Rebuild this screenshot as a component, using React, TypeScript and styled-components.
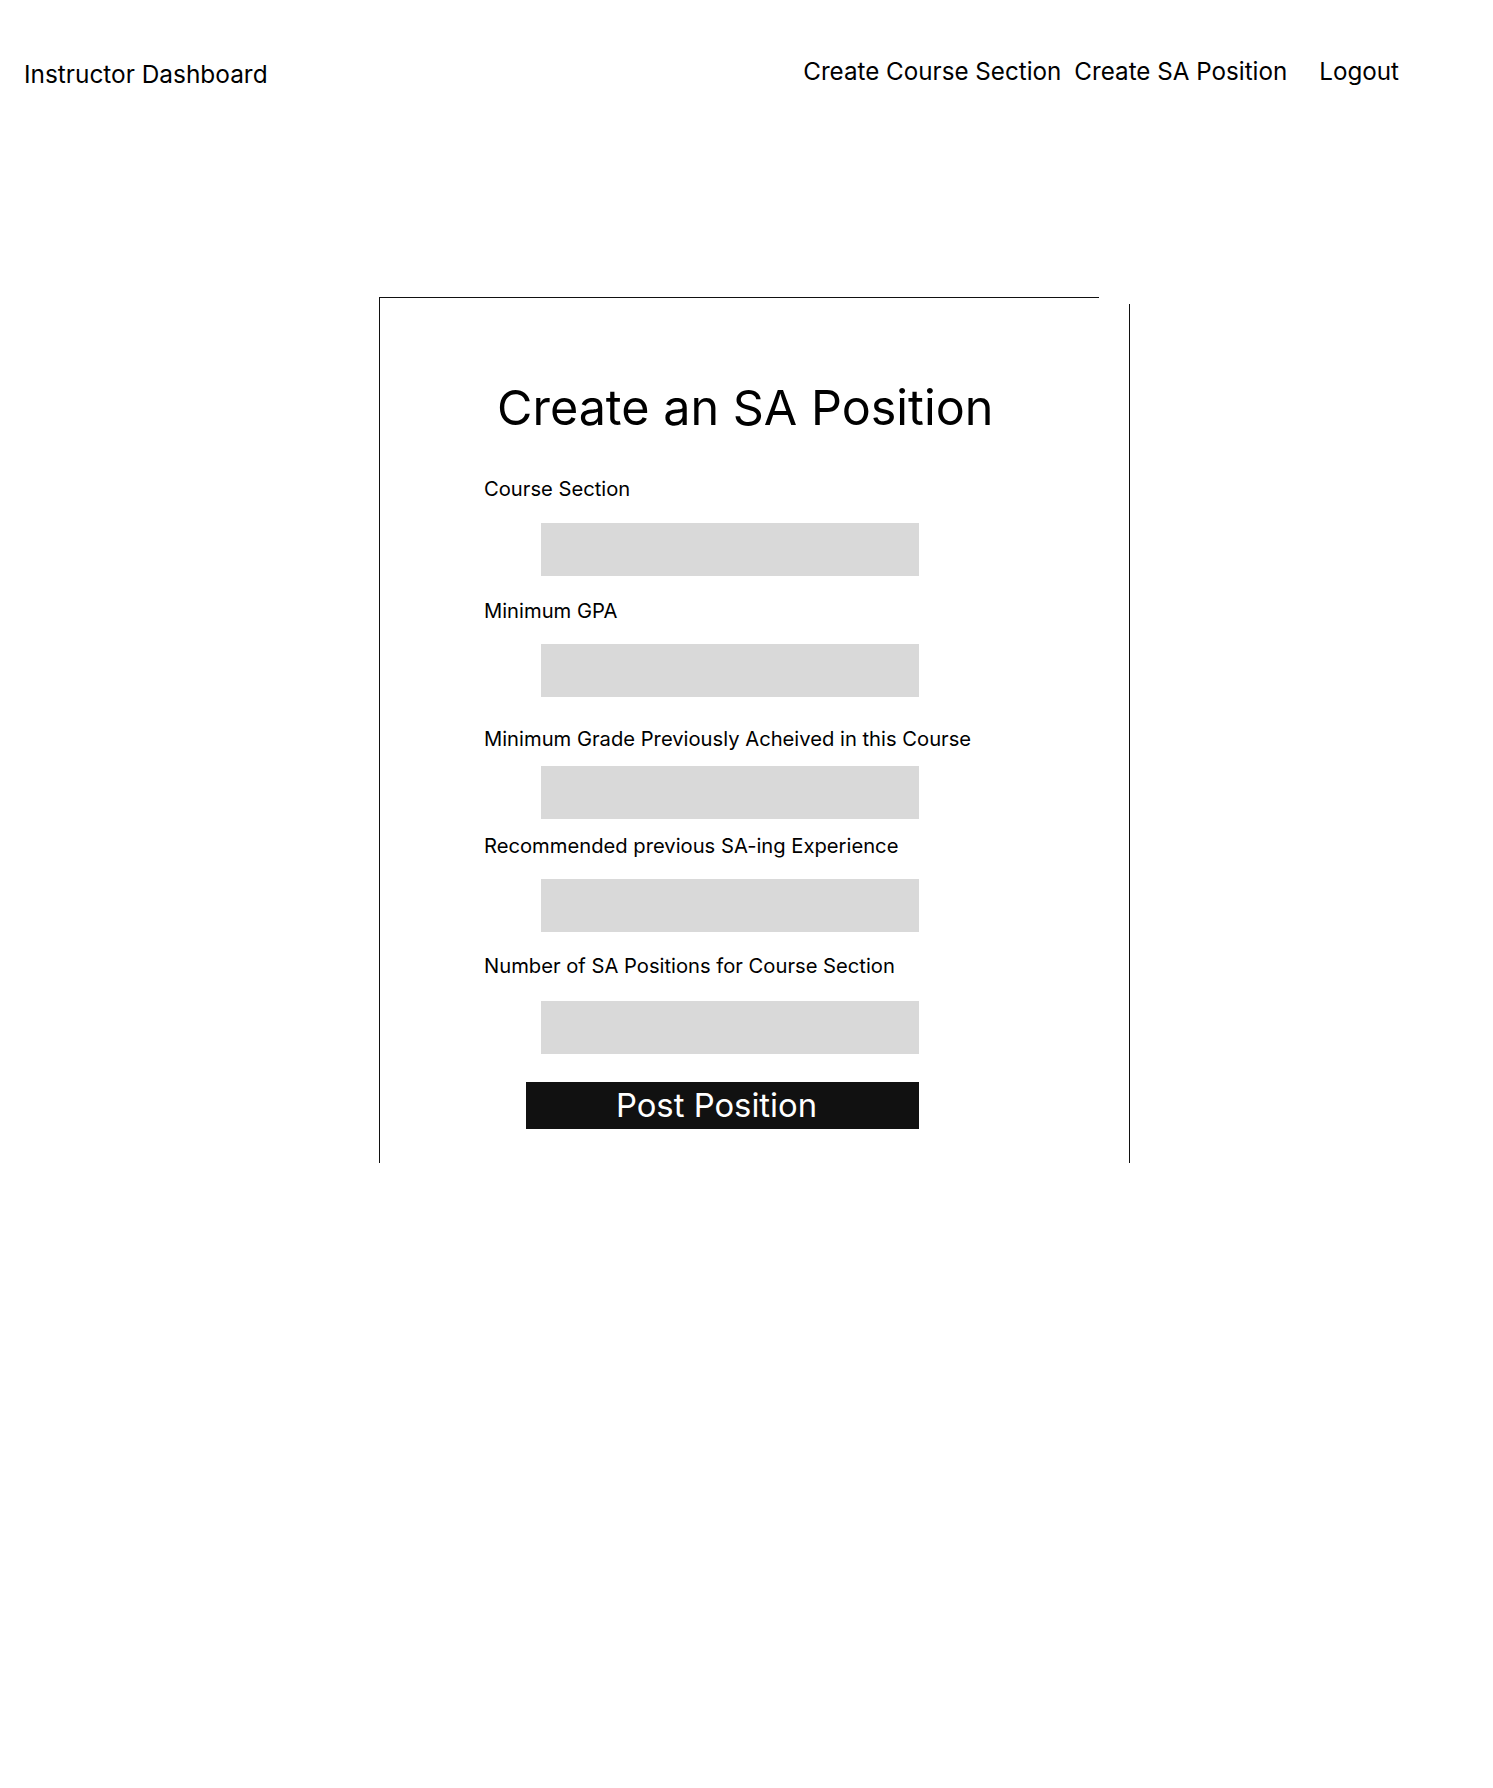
import React from "react";
import styled, { createGlobalStyle } from "styled-components";

const GlobalStyle = createGlobalStyle`
  html, body {
    margin: 0;
    padding: 0;
    background: #ffffff;
    font-family: Inter, "Noto Sans", "Liberation Sans", sans-serif;
    color: #000000;
  }
`;

const Page = styled.div`
  width: 1493px;
  min-height: 1788px;
  background: #ffffff;
  display: flex;
  flex-direction: column;
`;

const TopBar = styled.header`
  display: flex;
  align-items: center;
  height: 146px;
  padding: 0 0 0 24px;
  box-sizing: border-box;
`;

const Brand = styled.div`
  font-size: 24.4px;
  line-height: 30px;
  font-weight: 400;
  margin-top: 2px;
  flex: 1;
`;

const Nav = styled.nav`
  display: flex;
  align-items: center;
  padding-right: 94px;
  margin-top: -2px;
`;

const NavLink = styled.a<{ $gap?: number }>`
  font-size: 24.2px;
  line-height: 30px;
  color: #000000;
  text-decoration: none;
  margin-left: ${(p) => p.$gap ?? 0}px;
  cursor: pointer;
`;

const Main = styled.main`
  display: flex;
  padding: 151px 0 0 379px;
`;

const Card = styled.section`
  position: relative;
  width: 751px;
  height: 866px;
  box-sizing: border-box;
  border-left: 1px solid #111111;
  display: flex;
  flex-direction: column;
  padding: 82px 0 0 0;

  &::before {
    content: "";
    position: absolute;
    left: -1px;
    top: 0;
    width: 720px;
    height: 1px;
    background: #111111;
  }

  &::after {
    content: "";
    position: absolute;
    right: 0;
    top: 7px;
    bottom: 0;
    width: 1px;
    background: #111111;
  }
`;

const Title = styled.h1`
  margin: 0 0 0 117px;
  font-size: 48.5px;
  line-height: 58px;
  font-weight: 400;
`;

const Form = styled.form`
  display: flex;
  flex-direction: column;
  align-items: flex-start;
  padding-left: 104px;
  margin-top: 40px;
`;

const Label = styled.label<{ $top: number; $bottom: number }>`
  font-size: 20.2px;
  line-height: 24px;
  font-weight: 400;
  margin-top: ${(p) => p.$top}px;
  margin-bottom: ${(p) => p.$bottom}px;
`;

const Input = styled.div`
  width: 378px;
  height: 53px;
  margin-left: 57px;
  background: #d9d9d9;
`;

const Button = styled.button`
  margin: 28px 0 0 42px;
  width: 393px;
  height: 47px;
  background: #111111;
  color: #ffffff;
  border: none;
  padding: 0 12px 0 0;
  font-family: inherit;
  font-size: 32.8px;
  line-height: 47px;
  font-weight: 400;
  display: flex;
  align-items: center;
  justify-content: center;
  cursor: pointer;
`;

const fields = [
  { label: "Course Section", top: 0, bottom: 22 },
  { label: "Minimum GPA", top: 23, bottom: 21 },
  { label: "Minimum Grade Previously Acheived in this Course", top: 30, bottom: 15 },
  { label: "Recommended previous SA-ing Experience", top: 15, bottom: 21 },
  { label: "Number of SA Positions for Course Section", top: 22, bottom: 23 },
];

export default function App() {
  return (
    <>
      <GlobalStyle />
      <Page>
        <TopBar>
          <Brand>Instructor Dashboard</Brand>
          <Nav>
            <NavLink>Create Course Section</NavLink>
            <NavLink $gap={13}>Create SA Position</NavLink>
            <NavLink $gap={32}>Logout</NavLink>
          </Nav>
        </TopBar>
        <Main>
          <Card>
            <Title>Create an SA Position</Title>
            <Form onSubmit={(e) => e.preventDefault()}>
              {fields.map((f) => (
                <React.Fragment key={f.label}>
                  <Label $top={f.top} $bottom={f.bottom}>
                    {f.label}
                  </Label>
                  <Input />
                </React.Fragment>
              ))}
              <Button type="submit">Post Position</Button>
            </Form>
          </Card>
        </Main>
      </Page>
    </>
  );
}
